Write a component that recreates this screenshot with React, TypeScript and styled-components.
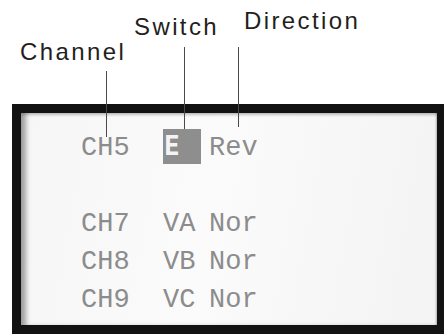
import React from "react";
import styled, { createGlobalStyle } from "styled-components";

const GlobalStyle = createGlobalStyle`
  html, body {
    margin: 0;
    padding: 0;
    background: #ffffff;
  }
`;

const Canvas = styled.div`
  position: relative;
  width: 444px;
  height: 334px;
  overflow: hidden;
  background: #ffffff;
`;

// callout labels sit over the picture like a diagram
const Callout = styled.div<{ $left: number; $top: number }>`
  position: absolute;
  left: ${(p) => p.$left}px;
  top: ${(p) => p.$top}px;
  font-family: "Liberation Sans", Arial, sans-serif;
  font-size: 24px;
  line-height: 24px;
  letter-spacing: 2.4px;
  color: #231f20;
  white-space: nowrap;
  z-index: 2;
`;

const Leader = styled.div<{ $x: number; $from: number; $to: number }>`
  position: absolute;
  left: ${(p) => p.$x}px;
  top: ${(p) => p.$from}px;
  height: ${(p) => p.$to - p.$from}px;
  width: 1px;
  background: #4a4a4a;
  z-index: 2;
`;

const Bezel = styled.div`
  margin: 104px 0 0 12px;
  width: 432px;
  height: 230px;
  box-sizing: border-box;
  border-style: solid;
  border-color: #121212;
  border-width: 9px 7px 9px 9px;
  background: linear-gradient(100deg, #f6f6f6 0%, #fbfbfb 45%, #f3f3f3 100%);
  box-shadow: inset 7px 0 5px -2px rgba(0, 0, 0, 0.35),
    inset 0 3px 3px -1px rgba(0, 0, 0, 0.2),
    inset -2px 0 2px -1px rgba(0, 0, 0, 0.25);
  padding: 16px 0 0 60px;
`;

const Table = styled.div`
  display: grid;
  grid-template-columns: 82px 48px auto;
  grid-auto-rows: 38px;
  justify-content: start;
`;

const Cell = styled.div`
  font-family: "Liberation Mono", "Courier New", monospace;
  font-size: 27px;
  line-height: 38px;
  color: #8c8c8c;
  white-space: nowrap;
`;

const DirCell = styled(Cell)`
  margin-left: -2px;
`;

const Selected = styled.div`
  width: 38px;
  height: 35px;
  background: #8e8e8e;
  font-family: "DejaVu Sans Mono", monospace;
  font-weight: bold;
  font-size: 26px;
  line-height: 35px;
  color: #f4f4f4;
  padding-left: 1px;
  box-sizing: border-box;
`;

const Blank = styled.div`
  grid-column: 1 / -1;
`;

type Row = { ch: string; sw: string; dir: string; active?: boolean };

const rows: (Row | null)[] = [
  { ch: "CH5", sw: "E", dir: "Rev", active: true },
  null,
  { ch: "CH7", sw: "VA", dir: "Nor" },
  { ch: "CH8", sw: "VB", dir: "Nor" },
  { ch: "CH9", sw: "VC", dir: "Nor" },
];

export default function App() {
  return (
    <>
      <GlobalStyle />
      <Canvas>
        <Callout $left={20} $top={40}>Channel</Callout>
        <Callout $left={134} $top={15}>Switch</Callout>
        <Callout $left={244} $top={9}>Direction</Callout>
        <Leader $x={106} $from={71} $to={137} />
        <Leader $x={184} $from={47} $to={129} />
        <Leader $x={238} $from={47} $to={127} />
        <Bezel>
          <Table>
            {rows.map((r, i) =>
              r ? (
                <React.Fragment key={i}>
                  <Cell>{r.ch}</Cell>
                  {r.active ? <Selected>{r.sw}</Selected> : <Cell>{r.sw}</Cell>}
                  <DirCell>{r.dir}</DirCell>
                </React.Fragment>
              ) : (
                <Blank key={i} />
              )
            )}
          </Table>
        </Bezel>
      </Canvas>
    </>
  );
}
